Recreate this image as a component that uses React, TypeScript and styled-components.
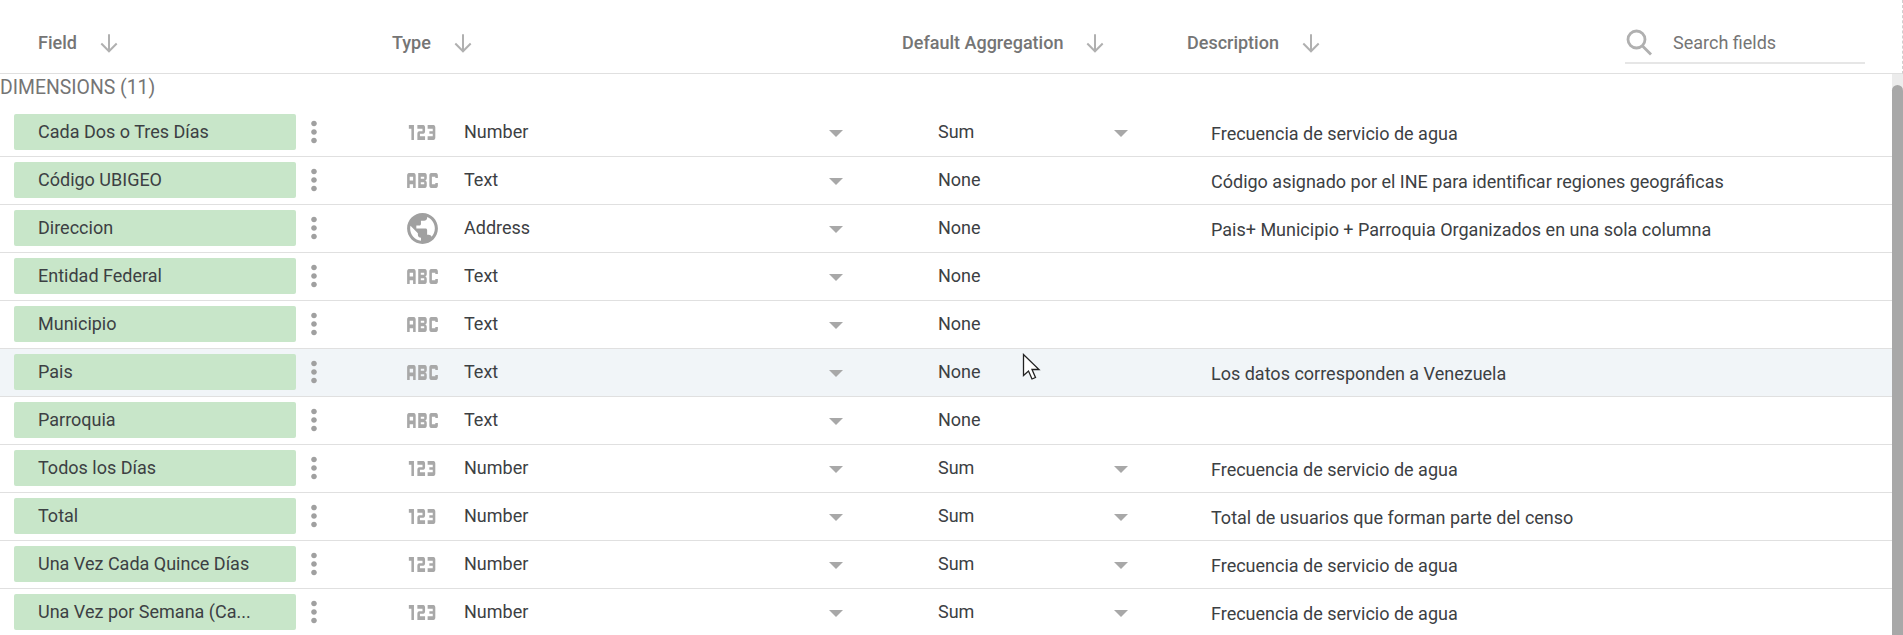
import React from "react";
import styled, { createGlobalStyle } from "styled-components";
import { MdAbc, Md123, MdPublic, MdMoreVert } from "react-icons/md";

const GlobalStyle = createGlobalStyle`
  html, body {
    margin: 0;
    height: 100%;
    overflow: hidden;
    background: #fff;
    font-family: Roboto, "Liberation Sans", sans-serif;
  }
`;

const Page = styled.div`
  position: relative;
  height: 635px;
  overflow: hidden;
  color: #3c4043;
`;

const Header = styled.div`
  display: grid;
  grid-template-columns: 392px 510px 285px 438px 1fr;
  align-items: center;
  height: 61px;
  padding-top: 12px;
  border-bottom: 1px solid #e0e0e0;
  border-right: 1px dashed #d0d0d0;
  font-size: 18px;
  font-weight: 500;
  color: #757575;
`;

const HeaderCell = styled.div<{ $indent?: number }>`
  display: flex;
  align-items: center;
  padding-left: ${(props) => props.$indent || 0}px;
`;

const SortArrow = styled.svg`
  margin-left: 21px;
  width: 22px;
  height: 22px;
  fill: none;
  stroke: #b0b0b0;
  stroke-width: 1.8;
`;

const Search = styled.div`
  display: flex;
  align-items: center;
  width: 240px;
  height: 41px;
  margin-top: 2px;
  padding-bottom: 1px;
  border-bottom: 2px solid #e6e6e6;
  box-sizing: border-box;
  font-weight: 400;
`;

const SearchIcon = styled.svg`
  width: 28px;
  height: 28px;
  margin-right: 20px;
  fill: none;
  stroke: #b0b0b0;
  stroke-width: 2.800;
`;

const Body = styled.div`
  display: flex;
`;

const List = styled.div`
  flex: 1;
`;

const SectionTitle = styled.div`
  height: 35px;
  line-height: 27px;
  font-size: 19.400px;
  color: #757575;
`;

const Row = styled.div<{ $active?: boolean }>`
  display: grid;
  grid-template-columns: 282px 111px 57px 474px 274px 1fr;
  align-items: center;
  height: 46px;
  padding: 0 0 1px 14px;
  border-bottom: 1px solid #e0e0e0;
  font-size: 18px;
  background: ${(props) => (props.$active ? "#f1f5f8" : "#fff")};
`;

const Chip = styled.div`
  height: 36px;
  line-height: 36px;
  padding: 0 24px;
  border-radius: 2px;
  background: #c8e6c9;
  color: #3c4043;
  white-space: nowrap;
`;

const Kebab = styled(MdMoreVert)`
  margin-left: 1px;
  color: #a0a0a0;
  font-size: 34px;
`;

const TypeIcon = styled.div`
  display: flex;
  align-items: center;
  margin-left: -5px;
  color: #a8a8a8;
  font-size: 41px;
  transform: scaleY(1.45);
`;

const GlobeIcon = styled(MdPublic)`
  margin-left: -3px;
  font-size: 37px;
  color: #a0a0a0;
`;

const SelectCell = styled.div<{ $width: number }>`
  display: flex;
  align-items: center;
  justify-content: space-between;
  width: ${(props) => props.$width}px;
  margin-bottom: 2px;
`;

const Caret = styled.span`
  width: 0;
  height: 0;
  border-left: 7px solid transparent;
  border-right: 7px solid transparent;
  border-top: 7px solid #a8a8a8;
  margin-top: 4px;
`;

const Description = styled.div`
  margin-left: -1px;
  padding-top: 3px;
  white-space: nowrap;
`;

const Track = styled.div`
  width: 11px;
  padding-top: 11px;
  background: #ececec;
`;

const Thumb = styled.div`
  height: 560px;
  border-radius: 6px 6px 0 0;
  background: #a8a8a8;
`;

const Cursor = styled.svg`
  position: absolute;
  left: 1022px;
  top: 353px;
  width: 20px;
  height: 30px;
`;

type FieldRow = {
  name: string;
  type: "Number" | "Text" | "Address";
  aggregation: "Sum" | "None";
  description?: string;
};

const WATER = "Frecuencia de servicio de agua";

const rows: FieldRow[] = [
  { name: "Cada Dos o Tres Días", type: "Number", aggregation: "Sum", description: WATER },
  { name: "Código UBIGEO", type: "Text", aggregation: "None", description: "Código asignado por el INE para identificar regiones geográficas" },
  { name: "Direccion", type: "Address", aggregation: "None", description: "Pais+ Municipio + Parroquia Organizados en una sola columna" },
  { name: "Entidad Federal", type: "Text", aggregation: "None" },
  { name: "Municipio", type: "Text", aggregation: "None" },
  { name: "Pais", type: "Text", aggregation: "None", description: "Los datos corresponden a Venezuela" },
  { name: "Parroquia", type: "Text", aggregation: "None" },
  { name: "Todos los Días", type: "Number", aggregation: "Sum", description: WATER },
  { name: "Total", type: "Number", aggregation: "Sum", description: "Total de usuarios que forman parte del censo" },
  { name: "Una Vez Cada Quince Días", type: "Number", aggregation: "Sum", description: WATER },
  { name: "Una Vez por Semana (Ca...", type: "Number", aggregation: "Sum", description: WATER },
];

const Arrow = () => (
  <SortArrow viewBox="0 0 20 20">
    <path d="M10 2v15M3 10.500 10 17.500l7-7" />
  </SortArrow>
);

const renderType = (type: FieldRow["type"]) => {
  if (type === "Address") return <GlobeIcon />;
  return <TypeIcon>{type === "Number" ? <Md123 /> : <MdAbc />}</TypeIcon>;
};

const App = () => {
  return (
    <Page>
      <GlobalStyle />
      <Header>
        <HeaderCell $indent={38}>Field<Arrow /></HeaderCell>
        <HeaderCell>Type<Arrow /></HeaderCell>
        <HeaderCell>Default Aggregation<Arrow /></HeaderCell>
        <HeaderCell>Description<Arrow /></HeaderCell>
        <Search>
          <SearchIcon viewBox="0 0 28 28">
            <circle cx="11.500" cy="11.500" r="8.500" />
            <path d="M17.500 18 26 26.500" />
          </SearchIcon>
          Search fields
        </Search>
      </Header>
      <Body>
        <List>
          <SectionTitle>DIMENSIONS (11)</SectionTitle>
          {rows.map((row) => (
            <Row key={row.name} $active={row.name === "Pais"}>
              <Chip>{row.name}</Chip>
              <Kebab />
              {renderType(row.type)}
              <SelectCell $width={379}>
                {row.type}
                <Caret />
              </SelectCell>
              <SelectCell $width={190}>
                {row.aggregation}
                {row.aggregation === "Sum" && <Caret />}
              </SelectCell>
              <Description>{row.description}</Description>
            </Row>
          ))}
        </List>
        <Track>
          <Thumb />
        </Track>
      </Body>
      <Cursor viewBox="0 0 20 30">
        <path d="M1.500 1.500v21l5-4.500 3.500 8 3.500-1.500-3.500-8h7z" fill="#fff" stroke="#222" strokeWidth="1.300" />
      </Cursor>
    </Page>
  );
};

export default App;
